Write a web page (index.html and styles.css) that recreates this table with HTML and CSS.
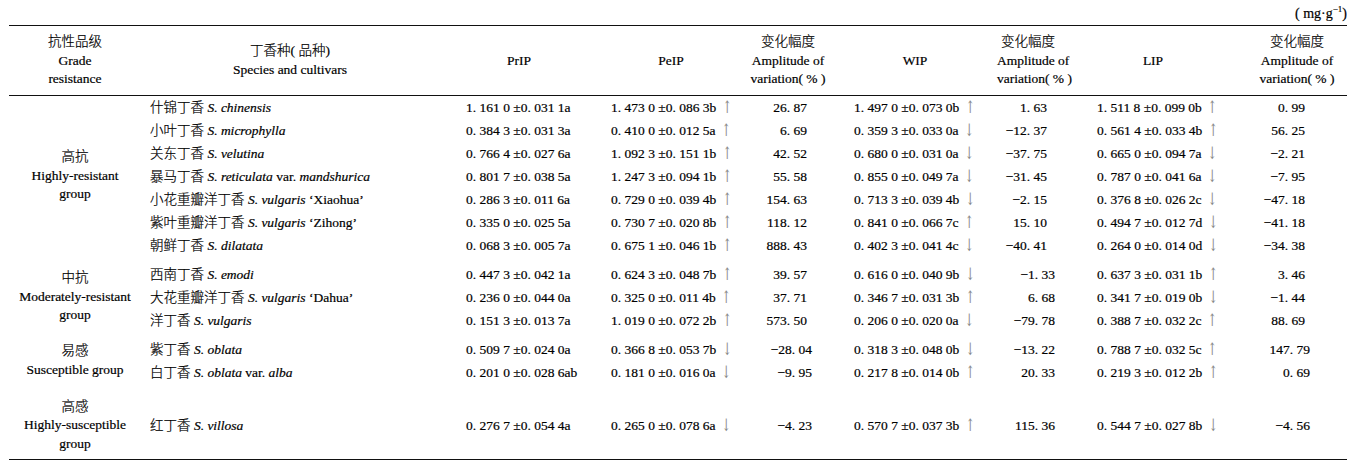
FILE: index.html
```html
<!DOCTYPE html>
<html>
<head>
<meta charset="utf-8">
<title>抗性品级 丁香种</title>
<link rel="stylesheet" href="styles.css">
</head>
<body>
<div class="page">
  <div class="unit">( mg·g<sup>−1</sup>)</div>
  <table class="data">
    <colgroup>
      <col class="w-grade"><col class="w-sp"><col class="w-prip"><col class="w-peip"><col class="w-amp1"><col class="w-wip"><col class="w-amp2"><col class="w-lip"><col class="w-amp3">
    </colgroup>
    <thead>
      <tr>
        <th>抗性品级<br>Grade<br>resistance</th>
        <th>丁香种( 品种)<br>Species and cultivars</th>
        <th>PrIP</th>
        <th>PeIP</th>
        <th>变化幅度<br>Amplitude of<br>variation( % )</th>
        <th>WIP</th>
        <th>变化幅度<br>Amplitude of<br>variation( % )</th>
        <th>LIP</th>
        <th>变化幅度<br>Amplitude of<br>variation( % )</th>
      </tr>
    </thead>
    <tbody class="g1">
      <tr><td class="grade" rowspan="7">高抗<br>Highly-resistant<br>group</td><td>什锦丁香 <i>S. chinensis</i></td><td>1. 161 0 ±0. 031 1a</td><td>1. 473 0 ±0. 086 3b <span class="ar">↑</span></td><td>26. 87</td><td>1. 497 0 ±0. 073 0b <span class="ar">↑</span></td><td>1. 63</td><td>1. 511 8 ±0. 099 0b <span class="ar">↑</span></td><td>0. 99</td></tr>
      <tr><td>小叶丁香 <i>S. microphylla</i></td><td>0. 384 3 ±0. 031 3a</td><td>0. 410 0 ±0. 012 5a <span class="ar">↑</span></td><td>6. 69</td><td>0. 359 3 ±0. 033 0a <span class="ar">↓</span></td><td>−12. 37</td><td>0. 561 4 ±0. 033 4b <span class="ar">↑</span></td><td>56. 25</td></tr>
      <tr><td>关东丁香 <i>S. velutina</i></td><td>0. 766 4 ±0. 027 6a</td><td>1. 092 3 ±0. 151 1b <span class="ar">↑</span></td><td>42. 52</td><td>0. 680 0 ±0. 031 0a <span class="ar">↓</span></td><td>−37. 75</td><td>0. 665 0 ±0. 094 7a <span class="ar">↓</span></td><td>−2. 21</td></tr>
      <tr><td>暴马丁香 <i>S. reticulata</i> var. <i>mandshurica</i></td><td>0. 801 7 ±0. 038 5a</td><td>1. 247 3 ±0. 094 1b <span class="ar">↑</span></td><td>55. 58</td><td>0. 855 0 ±0. 049 7a <span class="ar">↓</span></td><td>−31. 45</td><td>0. 787 0 ±0. 041 6a <span class="ar">↓</span></td><td>−7. 95</td></tr>
      <tr><td>小花重瓣洋丁香 <i>S. vulgaris</i> ‘Xiaohua’</td><td>0. 286 3 ±0. 011 6a</td><td>0. 729 0 ±0. 039 4b <span class="ar">↑</span></td><td>154. 63</td><td>0. 713 3 ±0. 039 4b <span class="ar">↓</span></td><td>−2. 15</td><td>0. 376 8 ±0. 026 2c <span class="ar">↓</span></td><td>−47. 18</td></tr>
      <tr><td>紫叶重瓣洋丁香 <i>S. vulgaris</i> ‘Zihong’</td><td>0. 335 0 ±0. 025 5a</td><td>0. 730 7 ±0. 020 8b <span class="ar">↑</span></td><td>118. 12</td><td>0. 841 0 ±0. 066 7c <span class="ar">↑</span></td><td>15. 10</td><td>0. 494 7 ±0. 012 7d <span class="ar">↓</span></td><td>−41. 18</td></tr>
      <tr><td>朝鲜丁香 <i>S. dilatata</i></td><td>0. 068 3 ±0. 005 7a</td><td>0. 675 1 ±0. 046 1b <span class="ar">↑</span></td><td>888. 43</td><td>0. 402 3 ±0. 041 4c <span class="ar">↓</span></td><td>−40. 41</td><td>0. 264 0 ±0. 014 0d <span class="ar">↓</span></td><td>−34. 38</td></tr>
    </tbody>
    <tbody class="g2">
      <tr><td class="grade" rowspan="3">中抗<br>Moderately-resistant<br>group</td><td>西南丁香 <i>S. emodi</i></td><td>0. 447 3 ±0. 042 1a</td><td>0. 624 3 ±0. 048 7b <span class="ar">↑</span></td><td>39. 57</td><td>0. 616 0 ±0. 040 9b <span class="ar">↓</span></td><td>−1. 33</td><td>0. 637 3 ±0. 031 1b <span class="ar">↑</span></td><td>3. 46</td></tr>
      <tr><td>大花重瓣洋丁香 <i>S. vulgaris</i> ‘Dahua’</td><td>0. 236 0 ±0. 044 0a</td><td>0. 325 0 ±0. 011 4b <span class="ar">↑</span></td><td>37. 71</td><td>0. 346 7 ±0. 031 3b <span class="ar">↑</span></td><td>6. 68</td><td>0. 341 7 ±0. 019 0b <span class="ar">↓</span></td><td>−1. 44</td></tr>
      <tr><td>洋丁香 <i>S. vulgaris</i></td><td>0. 151 3 ±0. 013 7a</td><td>1. 019 0 ±0. 072 2b <span class="ar">↑</span></td><td>573. 50</td><td>0. 206 0 ±0. 020 0a <span class="ar">↓</span></td><td>−79. 78</td><td>0. 388 7 ±0. 032 2c <span class="ar">↑</span></td><td>88. 69</td></tr>
    </tbody>
    <tbody class="g3">
      <tr><td class="grade" rowspan="2">易感<br>Susceptible group</td><td>紫丁香 <i>S. oblata</i></td><td>0. 509 7 ±0. 024 0a</td><td>0. 366 8 ±0. 053 7b <span class="ar">↓</span></td><td class="neg">−28. 04</td><td>0. 318 3 ±0. 048 0b <span class="ar">↓</span></td><td>−13. 22</td><td>0. 788 7 ±0. 032 5c <span class="ar">↑</span></td><td>147. 79</td></tr>
      <tr><td>白丁香 <i>S. oblata</i> var. <i>alba</i></td><td>0. 201 0 ±0. 028 6ab</td><td>0. 181 0 ±0. 016 0a <span class="ar">↓</span></td><td class="neg">−9. 95</td><td>0. 217 8 ±0. 014 0b <span class="ar">↑</span></td><td>20. 33</td><td>0. 219 3 ±0. 012 2b <span class="ar">↑</span></td><td>0. 69</td></tr>
    </tbody>
    <tbody class="g4">
      <tr><td class="grade">高感<br>Highly-susceptible<br>group</td><td>红丁香 <i>S. villosa</i></td><td>0. 276 7 ±0. 054 4a</td><td>0. 265 0 ±0. 078 6a <span class="ar">↓</span></td><td class="neg">−4. 23</td><td>0. 570 7 ±0. 037 3b <span class="ar">↑</span></td><td>115. 36</td><td>0. 544 7 ±0. 027 8b <span class="ar">↓</span></td><td>−4. 56</td></tr>
    </tbody>
  </table>
</div>
</body>
</html>
```

FILE: styles.css
```css
html, body {
  margin: 0;
  padding: 0;
  background: #ffffff;
}

body {
  color: #000000;
  font-family: "Liberation Serif", "Noto Sans CJK SC", serif;
  font-size: 13.5px;
  font-weight: 300;
}

.page {
  width: 1338px;
  padding: 0 9px;
}

.unit {
  height: 25px;
  line-height: 27px;
  text-align: right;
  white-space: nowrap;
  font-size: 14px;
  -webkit-text-stroke: 0.2px #000;
}

.unit sup {
  font-size: 9px;
  line-height: 0;
  vertical-align: 6px;
}

.data {
  width: 1338px;
  table-layout: fixed;
  border-collapse: collapse;
  border-top: 1.5px solid #111;
  border-bottom: 1.5px solid #111;
}

.w-grade { width: 132px; }
.w-sp { width: 298px; }
.w-prip { width: 160px; }
.w-peip { width: 144px; }
.w-amp1 { width: 90px; }
.w-wip { width: 164px; }
.w-amp2 { width: 62px; }
.w-lip { width: 188px; }
.w-amp3 { width: 100px; }

.data th {
  font-weight: 300;
  line-height: 18.5px;
  padding: 7px 0 6px;
  text-align: center;
  vertical-align: middle;
  white-space: nowrap;
  border-bottom: 1.5px solid #111;
  -webkit-text-stroke: 0.2px #000;
}

.data td {
  padding: 0;
  line-height: 23px;
  white-space: nowrap;
  vertical-align: middle;
  text-align: left;
  -webkit-text-stroke: 0.2px #000;
}

.data td.grade {
  text-align: center;
  line-height: 18.5px;
}

.data td:nth-last-child(8) { padding-left: 9px; }
.data td:nth-last-child(7) { padding-left: 27px; }
.data td:nth-last-child(6) { padding-left: 12px; }
.data td:nth-last-child(5) { text-align: right; padding-right: 26px; }
.data td.neg:nth-last-child(5) { padding-right: 21px; }
.data td:nth-last-child(4) { padding-left: 21px; }
.data td:nth-last-child(3) { text-align: right; padding-right: 12px; }
.data td:nth-last-child(2) { padding-left: 38px; }
.data td:nth-last-child(1) { text-align: right; padding-right: 42px; }

.g2 td:nth-last-child(3),
.g3 td:nth-last-child(3),
.g4 td:nth-last-child(3) { padding-right: 4px; }

.g3 td:nth-last-child(1),
.g4 td:nth-last-child(1) { padding-right: 37px; }

.g2 tr:first-child td,
.g3 tr:first-child td { padding-top: 6px; }

.g4 tr td { padding-top: 30px; padding-bottom: 22px; }
.g4 tr td.grade { padding-top: 9px; padding-bottom: 0; }

.ar {
  display: inline-block;
  color: #8a8a8a;
  font-family: "DejaVu Serif", serif;
  font-size: 15px;
  line-height: 10px;
  transform: scale(0.75, 1.15);
  margin-left: 1px;
  -webkit-text-stroke: 0;
}
```
